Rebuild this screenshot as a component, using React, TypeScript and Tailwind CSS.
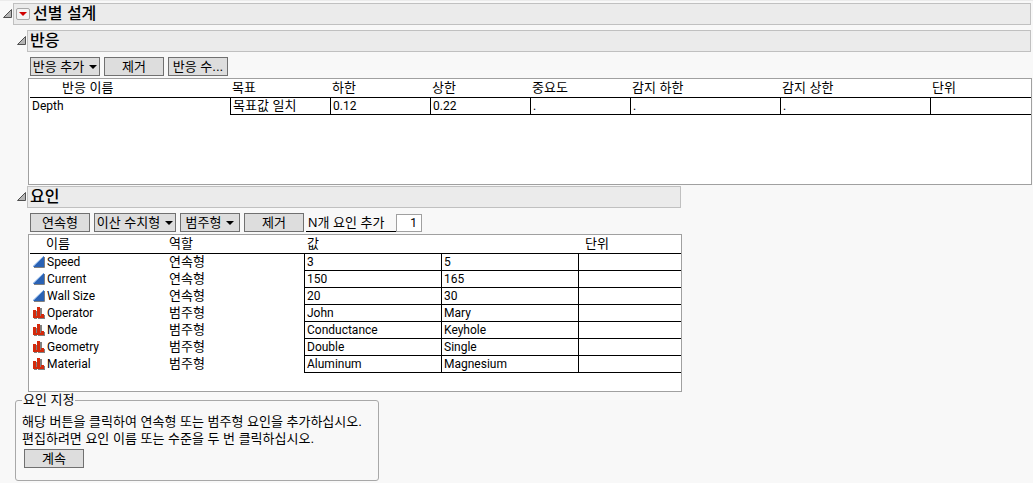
import React from 'react'
import type { ReactNode } from 'react'

type Factor = {
  name: string
  role: string
  continuous: boolean
  values: [string, string]
}

const responseColumns = [
  { label: '목표', width: 'w-[100px]' },
  { label: '하한', width: 'w-[100px]' },
  { label: '상한', width: 'w-[100px]' },
  { label: '중요도', width: 'w-[100px]' },
  { label: '감지 하한', width: 'w-[150px]' },
  { label: '감지 상한', width: 'w-[150px]' },
  { label: '단위', width: '' },
]

const factors: Factor[] = [
  { name: 'Speed', role: '연속형', continuous: true, values: ['3', '5'] },
  { name: 'Current', role: '연속형', continuous: true, values: ['150', '165'] },
  { name: 'Wall Size', role: '연속형', continuous: true, values: ['20', '30'] },
  { name: 'Operator', role: '범주형', continuous: false, values: ['John', 'Mary'] },
  { name: 'Mode', role: '범주형', continuous: false, values: ['Conductance', 'Keyhole'] },
  { name: 'Geometry', role: '범주형', continuous: false, values: ['Double', 'Single'] },
  { name: 'Material', role: '범주형', continuous: false, values: ['Aluminum', 'Magnesium'] },
]

const headCell =
  'h-[19px] border-b border-black p-0 pl-[2px] text-left text-[13px] leading-[16px] font-normal whitespace-nowrap'
const latin = 'font-[Roboto,sans-serif] text-[12px] leading-[16px]'
const gridCell = `h-[17px] border-b border-l border-black p-0 pl-[2px] align-top whitespace-nowrap ${latin}`

const ContinuousIcon = () => (
  <svg width="12" height="12" viewBox="0 0 12 12" aria-hidden="true">
    <path d="M0 11L11 0V11Z" fill="#2a62b4" />
    <path d="M0 10.5L11 0" stroke="#6fa0e0" strokeWidth="1" />
    <path d="M1 11.5H11.5V1" fill="none" stroke="#808080" />
  </svg>
)

const NominalIcon = () => (
  <svg
    width="12"
    height="12"
    viewBox="0 0 12 12"
    shapeRendering="crispEdges"
    aria-hidden="true"
  >
    <path d="M1 4H4V12H1ZM5 1H9V12H5ZM9 8H12V12H9Z" fill="#808080" />
    <path d="M0 3H3V11H0ZM4 0H7V11H4ZM8 7H11V11H8ZM3 9H8V11H3Z" fill="#d42a0c" />
  </svg>
)

const Caret = () => (
  <svg width="8" height="4" viewBox="0 0 8 4" aria-hidden="true">
    <path d="M0 0H8L4 4Z" fill="#000" />
  </svg>
)

const OutlineBar = ({
  title,
  menu,
}: {
  title: string
  menu?: boolean
}) => (
  <div className="flex items-center gap-px">
    <button aria-label={`${title} 접기`} className="shrink-0 pb-px">
      <svg width="9" height="9" viewBox="0 0 9 9" className="block">
        <path d="M0.5 8.5L8.5 0.5V8.5Z" fill="#b4b4b4" stroke="#505050" />
      </svg>
    </button>
    <div className="flex h-[22px] grow items-center gap-[3px] border border-[#c0c0c0] bg-[#ebebeb] pl-[2px]">
      {menu && (
        <button
          aria-label="메뉴"
          className="flex h-[12px] w-[14px] items-center justify-center rounded-xs border border-[#a8a8a8] bg-[#f4f4f4]"
        >
          <svg width="8" height="4" viewBox="0 0 8 4">
            <path d="M0 0H8L4 4Z" fill="#d00000" />
          </svg>
        </button>
      )}
      <h2 className="text-[16px] leading-[20px] font-medium">{title}</h2>
    </div>
  </div>
)

const PushButton = ({
  children,
  menu,
  width = 'w-[60px]',
}: {
  children: ReactNode
  menu?: boolean
  width?: string
}) => (
  <button
    className={`flex h-[19px] shrink-0 items-center justify-center gap-[5px] border border-[#707070] bg-[#dddddd] text-[13px] leading-[16px] whitespace-nowrap ${width}`}
  >
    {children}
    {menu && <Caret />}
  </button>
)

const ResponseTable = () => (
  <div className="min-h-[107px] border border-[#a0a0a0] bg-white pl-px">
    <table className="w-full table-fixed border-separate border-spacing-0">
      <thead>
        <tr>
          <th className={`${headCell} w-[200px]`}>
            <span className="pl-[30px]">반응 이름</span>
          </th>
          {responseColumns.map(({ label, width }) => (
            <th key={label} className={`${headCell} ${width}`}>
              {label}
            </th>
          ))}
        </tr>
      </thead>
      <tbody>
        <tr>
          <td className={`p-0 pl-[2px] align-top ${latin}`}>Depth</td>
          <td className="h-[17px] border-b border-l border-black p-0 pl-[2px] align-top text-[13px] leading-[16px]">
            목표값 일치
          </td>
          <td className={gridCell}>0.12</td>
          <td className={gridCell}>0.22</td>
          <td className={gridCell}>.</td>
          <td className={gridCell}>.</td>
          <td className={gridCell}>.</td>
          <td className={gridCell}></td>
        </tr>
      </tbody>
    </table>
  </div>
)

const FactorTable = () => (
  <div className="min-h-[158px] border border-[#a0a0a0] bg-white pl-px">
    <table className="w-full table-fixed border-separate border-spacing-0">
      <thead>
        <tr>
          <th className={`${headCell} w-[137px]`}>
            <span className="pl-[14px]">이름</span>
          </th>
          <th className={`${headCell} w-[137px]`}>역할</th>
          <th colSpan={2} className={`${headCell} w-[274px]`}>
            <span className="pl-px">값</span>
          </th>
          <th className={headCell}>
            <span className="pl-[5px]">단위</span>
          </th>
        </tr>
      </thead>
      <tbody>
        {factors.map(({ name, role, continuous, values }) => (
          <tr key={name}>
            <td className={`h-[17px] p-0 pl-[3px] align-top ${latin}`}>
              <div className="flex items-center gap-[2px]">
                {continuous ? <ContinuousIcon /> : <NominalIcon />}
                {name}
              </div>
            </td>
            <td className="p-0 pl-[2px] align-top text-[13px] leading-[16px]">
              {role}
            </td>
            <td className={gridCell}>{values[0]}</td>
            <td className={gridCell}>{values[1]}</td>
            <td className={gridCell}></td>
          </tr>
        ))}
      </tbody>
    </table>
  </div>
)

const App = () => (
  <main className="min-h-screen border-t border-[#ebebeb] bg-[#f8f8f8] pt-[2px] pr-px pb-[2px] pl-[3px] font-['Liberation_Sans','Noto_Sans_CJK_KR',sans-serif] text-black">
    <div className="pr-px">
      <OutlineBar title="선별 설계" menu />
    </div>

    <section className="mt-[5px] pl-[14px]">
      <div className="pr-px">
        <OutlineBar title="반응" />
      </div>
      <div className="pl-[11px]">
        <div className="mt-[5px] mb-[2px] flex gap-1 pl-[2px]">
          <PushButton menu width="w-[70px]">
            반응 추가
          </PushButton>
          <PushButton>제거</PushButton>
          <PushButton>반응 수...</PushButton>
        </div>
        <ResponseTable />
      </div>
    </section>

    <section className="mt-px max-w-[679px] pl-[14px]">
      <div className="pr-px">
        <OutlineBar title="요인" />
      </div>
      <div className="pl-[11px]">
        <div className="mt-[5px] mb-[2px] flex gap-1 pl-[2px]">
          <PushButton>연속형</PushButton>
          <PushButton menu width="w-[82px]">
            이산 수치형
          </PushButton>
          <PushButton menu>범주형</PushButton>
          <PushButton>제거</PushButton>
          <div className="-ml-[2px] flex items-end">
            <label
              htmlFor="factor-count"
              className="w-[90px] border-b border-black pl-[2px] text-[13px] leading-[17px] whitespace-nowrap"
            >
              N개 요인 추가
            </label>
            <input
              id="factor-count"
              defaultValue="1"
              className={`h-[18px] w-[26px] border border-[#a0a0a0] bg-white pr-1 text-right ${latin}`}
            />
          </div>
        </div>
        <FactorTable />
      </div>
    </section>

    <fieldset className="ml-3 max-w-[364px] rounded-[3px] border border-[#a8a8a8] px-[6px] pb-3">
      <legend className="px-px text-[13px] leading-[16px]">요인 지정</legend>
      <p className="pt-[5px] text-[13px] leading-[17px]">
        해당 버튼을 클릭하여 연속형 또는 범주형 요인을 추가하십시오.
        <br />
        편집하려면 요인 이름 또는 수준을 두 번 클릭하십시오.
      </p>
      <div className="mt-[2px] pl-[2px]">
        <PushButton>계속</PushButton>
      </div>
    </fieldset>
  </main>
)

export default App
